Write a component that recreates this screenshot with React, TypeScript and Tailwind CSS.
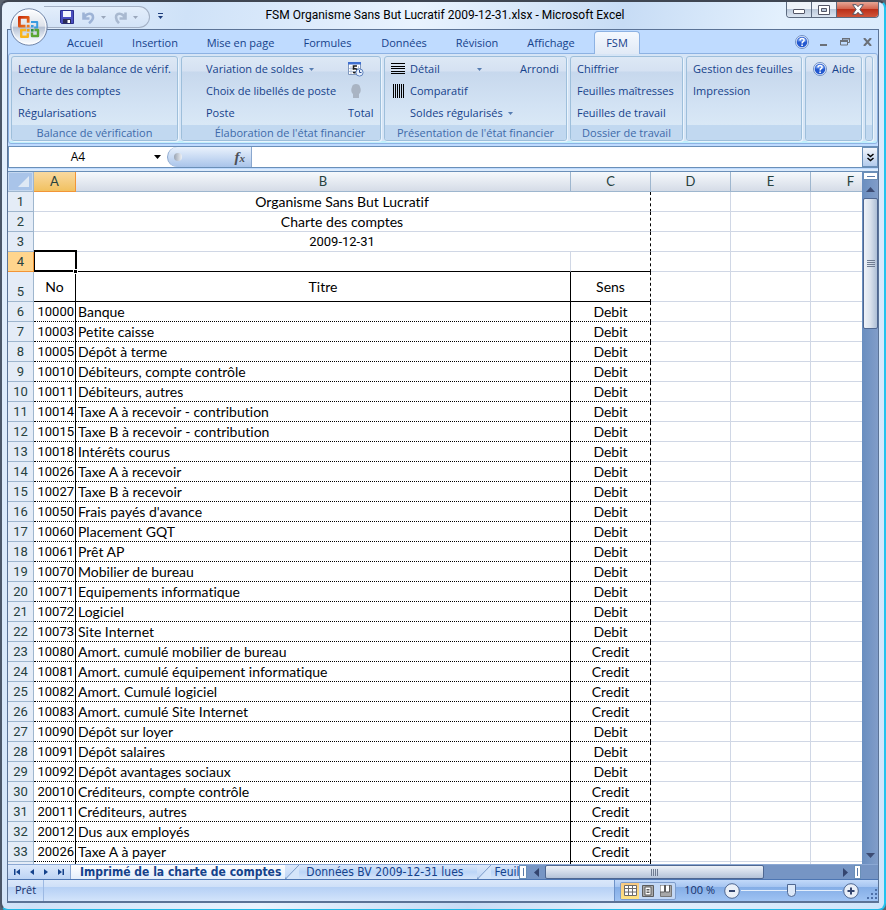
import { useState } from "react"
import type { ReactNode } from "react"

const tabs = [
  { label: "Accueil", width: "w-[66px]" },
  { label: "Insertion", width: "w-[74px]" },
  { label: "Mise en page", width: "w-[97px]" },
  { label: "Formules", width: "w-[77px]" },
  { label: "Données", width: "w-[76px]" },
  { label: "Révision", width: "w-[70px]" },
  { label: "Affichage", width: "w-[78px]" },
]

const accounts = [
  ["10000", "Banque", "Debit"],
  ["10003", "Petite caisse", "Debit"],
  ["10005", "Dépôt à terme", "Debit"],
  ["10010", "Débiteurs, compte contrôle", "Debit"],
  ["10011", "Débiteurs, autres", "Debit"],
  ["10014", "Taxe A à recevoir - contribution", "Debit"],
  ["10015", "Taxe B à recevoir - contribution", "Debit"],
  ["10018", "Intérêts courus", "Debit"],
  ["10026", "Taxe A à recevoir", "Debit"],
  ["10027", "Taxe B à recevoir", "Debit"],
  ["10050", "Frais payés d'avance", "Debit"],
  ["10060", "Placement GQT", "Debit"],
  ["10061", "Prêt AP", "Debit"],
  ["10070", "Mobilier de bureau", "Debit"],
  ["10071", "Equipements informatique", "Debit"],
  ["10072", "Logiciel", "Debit"],
  ["10073", "Site Internet", "Debit"],
  ["10080", "Amort. cumulé mobilier de bureau", "Credit"],
  ["10081", "Amort. cumulé équipement informatique", "Credit"],
  ["10082", "Amort. Cumulé logiciel", "Credit"],
  ["10083", "Amort. cumulé Site Internet", "Credit"],
  ["10090", "Dépôt sur loyer", "Debit"],
  ["10091", "Dépôt salaires", "Debit"],
  ["10092", "Dépôt avantages sociaux", "Debit"],
  ["20010", "Créditeurs, compte contrôle", "Credit"],
  ["20011", "Créditeurs, autres", "Credit"],
  ["20012", "Dus aux employés", "Credit"],
  ["20026", "Taxe A à payer", "Credit"],
]

const digits = "font-[Roboto,'Open_Sans',sans-serif] text-[13px]"

const titles = [
  { text: "Organisme Sans But Lucratif", font: "" },
  { text: "Charte des comptes", font: "" },
  { text: "2009-12-31", font: digits },
]

function OfficeOrb() {
  return (
    <svg viewBox="0 0 38 38" className="size-[38px]" aria-hidden="true">
      <defs>
        <linearGradient id="orb" x1="0" y1="0" x2="0" y2="1">
          <stop offset="0" stopColor="#ffffff" />
          <stop offset="0.48" stopColor="#dde2ea" />
          <stop offset="0.5" stopColor="#b4bfd2" />
          <stop offset="0.8" stopColor="#e8eef6" />
          <stop offset="1" stopColor="#ffffff" />
        </linearGradient>
        <linearGradient id="orbRed" x1="0" y1="0" x2="1" y2="1">
          <stop offset="0" stopColor="#c9300c" />
          <stop offset="1" stopColor="#f0791c" />
        </linearGradient>
      </defs>
      <circle cx="19" cy="19" r="18.2" fill="url(#orb)" stroke="#7286a8" />
      <circle cx="19" cy="19" r="16.8" fill="none" stroke="#ffffff" strokeOpacity="0.8" />
      <g fill="none" strokeLinejoin="round">
        <path d="M15.500 18.200H9.400V9.300h8.800v5.500" stroke="url(#orbRed)" strokeWidth="2.800" />
        <path d="M21 14h6.200v5.500h-3" stroke="#3a9be0" strokeWidth="2" />
        <path d="M16 22h-4.800v6.800h6.600v-3.500" stroke="#f9b51a" strokeWidth="2.400" />
        <path d="M22 24.500v3.500h6v-6h-3.500" stroke="#5aa632" strokeWidth="2.400" />
      </g>
      <path d="M16.800 16.800h2.800v2.600h-2.800z" fill="#f0791c" />
      <path d="M21 17h2.600v2.400H21z" fill="#3a9be0" />
      <path d="M21 21h2.600v2.600H21z" fill="#2f8f3a" />
      <path d="M16.800 21h2.800v2.600h-2.800z" fill="#f4a312" />
    </svg>
  )
}

function HelpIcon() {
  return (
    <svg viewBox="0 0 14 14" className="size-[14px] shrink-0" aria-hidden="true">
      <circle cx="7" cy="7" r="6.500" fill="#e6eefb" stroke="#6f8fc4" />
      <circle cx="7" cy="7" r="5.300" fill="#2358cf" />
      <path d="M2.200 6a5 5 0 0 1 9.600 0c-2 1.200-7 1.200-9.600 0z" fill="#7ea6f2" opacity="0.7" />
      <path d="M5 5.400c0-2.600 4.100-2.500 4.100-.2C9.100 6.700 7.100 6.700 7.100 8.400" fill="none" stroke="#fff" strokeWidth="1.500" />
      <path d="M6.300 9.500h1.600V11H6.300z" fill="#fff" />
    </svg>
  )
}

function Caret({ className = "text-[#567db1]" }: { className?: string }) {
  return (
    <svg viewBox="0 0 5 3" className={`h-[3px] w-[5px] shrink-0 ${className}`} aria-hidden="true">
      <path d="M0 0h5L2.500 3z" fill="currentColor" />
    </svg>
  )
}

function RibbonGroup({
  label = "",
  size,
  labelClass = "",
  children,
}: {
  label?: string
  size: string
  labelClass?: string
  children?: ReactNode
}) {
  return (
    <section
      className={`flex min-w-0 shrink grow flex-col overflow-hidden rounded-[3px] border border-[#9ebfdb] bg-[linear-gradient(#dde8f5_0px,#d5e1f2_14px,#c7d8ed_15px,#d3e3f4_50px,#d9e8f6_68px)] shadow-[1px_1px_0_#eaf4fd] ${size}`}
    >
      <div className="flex h-[68px] pt-px">{children}</div>
      <div className={`h-[15px] bg-[#c1d8f0] text-center leading-[15px] whitespace-nowrap text-[#3e6aaa] ${labelClass}`}>{label}</div>
    </section>
  )
}

function Cmd({ children, className = "" }: { children: ReactNode; className?: string }) {
  return (
    <button type="button" className={`flex h-[22px] items-center gap-[5px] whitespace-nowrap ${className}`}>
      {children}
    </button>
  )
}

function TitleBar() {
  return (
    <header className="relative flex h-[27px] items-start">
      <div className="mt-[4px] ml-[37px] flex h-[22px] w-[106px] shrink-0 items-center rounded-r-full border border-l-0 border-[#a3b0c4] bg-gradient-to-b from-[#e3eefb] to-[#d3e3f7] pl-[16px]">
        <button type="button" aria-label="Enregistrer">
          <svg viewBox="0 0 14 14" className="size-[14px]" aria-hidden="true">
            <path d="M.5.5h13v13h-12l-1-1z" fill="#4a4fc0" stroke="#2b2f8f" />
            <path d="M3 1h8v6H3z" fill="#f4f7fd" />
            <path d="M3 9h8v4.500H3z" fill="#2a2c55" />
            <path d="M7.500 10h2.500v3H7.500z" fill="#fff" />
          </svg>
        </button>
        <button type="button" aria-label="Annuler" className="ml-[8px] flex items-center gap-[6px]">
          <svg viewBox="0 0 13 13" className="size-[13px]" aria-hidden="true">
            <path d="M1.500 1.500v6h6M2 7C4.500 1.500 11 1.500 11 6.200c0 2.500-1.500 4-4 6" fill="none" stroke="#9db3d6" strokeWidth="2.600" />
          </svg>
          <Caret className="text-[#9aa7bb]" />
        </button>
        <button type="button" aria-label="Rétablir" className="ml-[8px] flex items-center gap-[6px]">
          <svg viewBox="0 0 13 13" className="size-[13px]" aria-hidden="true">
            <path d="M11.500 1.500v6h-6M11 7C8.500 1.500 2 1.500 2 6.200c0 2.500 1 4 3 6" fill="none" stroke="#a9b9d0" strokeWidth="2.600" />
          </svg>
          <Caret className="text-[#9aa7bb]" />
        </button>
      </div>
      <button type="button" aria-label="Personnaliser" className="mt-[11px] ml-[8px] flex w-[6px] flex-col gap-[2px]">
        <span className="h-px w-[5px] bg-[#1d3d7c]" />
        <Caret className="text-[#1d3d7c]" />
      </button>
      <h1 className="grow pr-[60px] text-center font-[Roboto,'Open_Sans',sans-serif] text-[12px] leading-[27px] font-normal whitespace-nowrap text-black">
        FSM Organisme Sans But Lucratif 2009-12-31.xlsx - Microsoft Excel
      </h1>
      <div className="flex h-[16px] overflow-hidden rounded-b-[4px] border border-t-0 border-[#5c6a7f]">
        <button type="button" aria-label="Réduire" className="flex w-[25px] items-center justify-center border-r border-[#5c6a7f] bg-[linear-gradient(#eef3f9_45%,#b9c7d9_46%,#dbe5f1)]">
          <span className="mt-[4px] h-[5px] w-[12px] rounded-[1px] border border-[#535666] bg-white" />
        </button>
        <button type="button" aria-label="Agrandir" className="flex w-[25px] items-center justify-center border-r border-[#5c6a7f] bg-[linear-gradient(#eef3f9_45%,#b9c7d9_46%,#dbe5f1)]">
          <svg viewBox="0 0 12 10" className="h-[10px] w-[12px]" aria-hidden="true">
            <path d="M.5.5h11v9H.5z" fill="#fff" stroke="#535666" />
            <path d="M3.500 3.500h5v3h-5z" fill="#b9c7d9" stroke="#535666" />
          </svg>
        </button>
        <button type="button" aria-label="Fermer" className="flex w-[41px] items-center justify-center bg-[linear-gradient(#e6a797,#d4654f_45%,#b92d17_46%,#d0553a)]">
          <svg viewBox="0 0 12 11" className="h-[11px] w-[12px]" aria-hidden="true">
            <path d="M.7.700h3.500L6 2.700 7.800.700h3.500L7.900 5.500l3.400 4.800H7.800L6 8.300l-1.800 2H.7l3.400-4.800z" fill="#fff" stroke="#535666" />
          </svg>
        </button>
      </div>
      <button type="button" aria-label="Bouton Office" className="absolute top-[6px] left-[3px] z-10">
        <OfficeOrb />
      </button>
    </header>
  )
}

function TabStrip() {
  return (
    <nav className="flex h-[23px] items-stretch bg-[#bfdbff] pl-[44px]">
      {tabs.map((tab) => (
        <button key={tab.label} type="button" className={`pt-[3px] whitespace-nowrap ${tab.width}`}>
          {tab.label}
        </button>
      ))}
      <button type="button" className="relative z-10 mt-px -mb-px ml-[4px] w-[46px] rounded-t-[4px] border border-b-0 border-[#8db2e3] bg-gradient-to-b from-[#f4f8fe] to-[#e1eaf6]">
        FSM
      </button>
      <div className="ml-auto flex items-center gap-[11px] pr-[6px] text-[#6b7078]">
        <button type="button" aria-label="Aide">
          <HelpIcon />
        </button>
        <button type="button" aria-label="Réduire le classeur" className="mt-[7px] h-[2px] w-[7px] bg-current" />
        <button type="button" aria-label="Restaurer le classeur" className="ml-[2px]">
          <svg viewBox="0 0 10 8" className="h-[8px] w-[10px]" aria-hidden="true">
            <path d="M2.500 2V.500h7v4H8M1 3h6.500v4H.500V3z" fill="none" stroke="currentColor" />
            <path d="M0 2h8v2H0zM2 0h8v1.500H2z" fill="currentColor" />
          </svg>
        </button>
        <button type="button" aria-label="Fermer le classeur" className="ml-[2px]">
          <svg viewBox="0 0 9 8" className="h-[8px] w-[9px]" aria-hidden="true">
            <path d="M1 0l7 8M8 0L1 8" fill="none" stroke="currentColor" strokeWidth="2" />
          </svg>
        </button>
      </div>
    </nav>
  )
}

function Ribbon() {
  return (
    <div className="flex h-[91px] gap-[3px] rounded-[3px] border border-[#8db2e3] bg-[#d6e5f6] py-[2px] pr-[4px] pl-[2px] shadow-[inset_0_-2px_0_#c0f0fc]">
      <RibbonGroup label="Balance de vérification" size="basis-[167px]">
        <div className="pl-[6px]">
          <Cmd>Lecture de la balance de vérif.</Cmd>
          <Cmd>Charte des comptes</Cmd>
          <Cmd>Régularisations</Cmd>
        </div>
      </RibbonGroup>
      <RibbonGroup label="Élaboration de l'état financier" size="basis-[200px]" labelClass="pl-[18px]">
        <div className="w-[151px] pl-[24px]">
          <Cmd>
            Variation de soldes <Caret />
          </Cmd>
          <Cmd>Choix de libellés de poste</Cmd>
          <Cmd>Poste</Cmd>
        </div>
        <div className="pl-[15px]">
          <Cmd>
            <svg viewBox="0 0 16 16" className="size-[16px]" aria-hidden="true">
              <path d="M.5 1.500h12v12H.500z" fill="#fff" stroke="#7f97bd" />
              <path d="M0 1h13v2.500H0z" fill="#3f6fd0" />
              <path d="M3 5v8M10.500 5v8M1 7.500h11M1 10.500h11" stroke="#b7c4da" />
              <path d="M9 5H5.500v3c3-.8 3.800.6 3.500 2S6.500 12 5 11.300" fill="none" stroke="#1c1c1c" strokeWidth="1.600" />
              <circle cx="11.500" cy="11.500" r="3.600" fill="#e6effc" stroke="#5f82bd" />
              <path d="M11.500 9v2.500h2" fill="none" stroke="#2c4f94" />
            </svg>
          </Cmd>
          <Cmd>
            <svg viewBox="0 0 16 16" className="size-[16px]" aria-hidden="true">
              <path d="M4 4c0-4 8-4 8 0 1 2 1 4 0 6l-1 1v4H5v-4l-1-1c-1-2-1-4 0-6z" fill="#a9b4c3" />
            </svg>
          </Cmd>
          <Cmd>Total</Cmd>
        </div>
      </RibbonGroup>
      <RibbonGroup label="Présentation de l'état financier" size="basis-[183px]">
        <div className="w-[135px] pl-[6px]">
          <Cmd>
            <svg viewBox="0 0 14 12" className="h-[12px] w-[14px]" aria-hidden="true">
              <path d="M0 .500h14M0 3.500h14M0 5.500h14M0 8.500h14M0 10.500h14" stroke="#000" />
            </svg>
            <span className="w-[62px] text-left">Détail</span>
            <Caret />
          </Cmd>
          <Cmd>
            <svg viewBox="0 0 14 14" className="h-[14px] w-[14px]" aria-hidden="true">
              <path d="M2.500 0v14M4.500 0v14M6.500 0v14M8.500 0v14M10.500 0v14M12.500 0v14" stroke="#000" />
            </svg>
            Comparatif
          </Cmd>
          <Cmd className="pl-[19px]">
            Soldes régularisés <Caret />
          </Cmd>
        </div>
        <Cmd>Arrondi</Cmd>
      </RibbonGroup>
      <RibbonGroup label="Dossier de travail" size="basis-[113px]">
        <div className="pl-[6px]">
          <Cmd>Chiffrier</Cmd>
          <Cmd>Feuilles maîtresses</Cmd>
          <Cmd>Feuilles de travail</Cmd>
        </div>
      </RibbonGroup>
      <RibbonGroup size="basis-[116px]">
        <div className="pl-[6px]">
          <Cmd>Gestion des feuilles</Cmd>
          <Cmd>Impression</Cmd>
        </div>
      </RibbonGroup>
      <RibbonGroup size="basis-[57px]">
        <Cmd className="pl-[7px]">
          <HelpIcon /> Aide
        </Cmd>
      </RibbonGroup>
      <RibbonGroup size="basis-[8px]" />
    </div>
  )
}

function FormulaBar() {
  const [name, setName] = useState("A4")
  const [formula, setFormula] = useState("")

  return (
    <div className="mt-[2px] flex h-[22px] border border-r-0 border-[#6a8fb8] bg-white">
      <input
        aria-label="Zone Nom"
        value={name}
        onChange={(e) => setName(e.target.value)}
        className="w-[138px] text-center text-[12px] text-black outline-none"
      />
      <button type="button" aria-label="Liste des noms" className="flex w-[20px] items-center justify-center">
        <svg viewBox="0 0 7 4" className="h-[4px] w-[7px]" aria-hidden="true">
          <path d="M0 0h7L3.500 4z" fill="#000" />
        </svg>
      </button>
      <div className="flex w-[85px] items-center justify-between rounded-l-full border border-y-0 border-[#8aa7ce] bg-gradient-to-b from-[#eaf2fc] to-[#a9c4ea] pr-[6px] pl-[6px]">
        <span className="size-[8px] rounded-full bg-gradient-to-r from-[#9aa4b2] to-[#eef1f5]" />
        <button type="button" aria-label="Insérer une fonction" className="font-['Liberation_Serif',serif] text-[15px] leading-[18px] font-bold text-[#4b4f57] italic">
          f<span className="text-[11px]">x</span>
        </button>
      </div>
      <input aria-label="Barre de formule" value={formula} onChange={(e) => setFormula(e.target.value)} className="min-w-0 grow outline-none" />
      <button type="button" aria-label="Développer la barre" className="flex w-[16px] items-center justify-center border border-[#6a8fb8] bg-gradient-to-b from-[#f1f5fb] to-[#b3cbec]">
        <svg viewBox="0 0 7 9" className="h-[9px] w-[7px]" aria-hidden="true">
          <path d="M.500 1l3 2.500 3-2.500M.500 5l3 2.500 3-2.500" fill="none" stroke="#000" strokeWidth="1.500" />
        </svg>
      </button>
    </div>
  )
}

const grid = "border-r border-b border-[#d0d7e5] p-0"
const colHead = "border-r border-b border-[#9eb6ce] bg-gradient-to-b from-[#f6f9fc] to-[#d5dce7] p-0 text-[13px] font-normal text-[#27413e]"

function RowHead({ n, active = false, tall = false }: { n: number; active?: boolean; tall?: boolean }) {
  return (
    <th
      scope="row"
      className={`border-r border-b p-0 align-bottom font-normal text-[#27413e] ${digits} ${tall ? "h-[30px]" : "h-[20px]"} ${
        active ? "border-[#f29536] bg-[#ffd58d]" : "border-[#9eb6ce] bg-[#e4ecf7]"
      }`}
    >
      {n}
    </th>
  )
}

function EmptyCells() {
  return (
    <>
      <td className={grid} />
      <td className={grid} />
      <td className={grid} />
    </>
  )
}

function Sheet() {
  return (
    <div className="min-w-0 grow overflow-hidden bg-white">
      <table className="w-[883px] table-fixed border-separate border-spacing-0 font-[Lato,'Open_Sans',sans-serif] text-[14px] leading-[19px] text-black [font-variant-ligatures:none]">
        <colgroup>
          <col className="w-[26px]" />
          <col className="w-[42px]" />
          <col className="w-[495px]" />
          <col className="w-[80px]" />
          <col className="w-[80px]" />
          <col className="w-[80px]" />
          <col className="w-[80px]" />
        </colgroup>
        <thead>
          <tr className="h-[20px]">
            <td className="border-r border-b border-[#9eb6ce] bg-[#a9c4e9] p-0">
              <svg viewBox="0 0 25 19" className="block h-[19px] w-[25px]" aria-hidden="true">
                <path d="M.500.500h24v18H.500z" fill="none" stroke="#c5d8f0" />
                <path d="M21 4v11H10z" fill="#dfe9f5" />
              </svg>
            </td>
            <th scope="col" className="border-r border-b border-[#f29536] bg-gradient-to-b from-[#f9d99f] to-[#f1c15f] p-0 text-[13px] font-normal text-[#27413e]">
              A
            </th>
            {["B", "C", "D", "E", "F"].map((c) => (
              <th key={c} scope="col" className={colHead}>
                {c}
              </th>
            ))}
          </tr>
        </thead>
        <tbody>
          {titles.map((title, i) => (
            <tr key={title.text}>
              <RowHead n={i + 1} />
              <td
                colSpan={3}
                className={`border-r border-b border-r-black border-b-[#d0d7e5] p-0 text-center [border-right-style:dashed] ${title.font}`}
              >
                {title.text}
              </td>
              <EmptyCells />
            </tr>
          ))}
          <tr>
            <RowHead n={4} active />
            <td className="relative border-r border-b border-black p-0">
              {/* selection frame with its fill handle */}
              <span className="absolute -top-[2px] -right-[2px] -bottom-px left-0 border-2 border-l border-black" />
              <span className="absolute -right-[3px] -bottom-[3px] size-[5px] border border-white bg-black" />
            </td>
            <td className="border-r border-b border-r-[#d0d7e5] border-b-black p-0" />
            <td className="border-r border-b border-black p-0 [border-right-style:dashed]" />
            <EmptyCells />
          </tr>
          <tr>
            <RowHead n={5} tall />
            <td className="border-r border-b border-black p-0 text-center">No</td>
            <td className="border-r border-b border-black p-0 text-center">Titre</td>
            <td className="border-r border-b border-black p-0 text-center [border-right-style:dashed]">Sens</td>
            <EmptyCells />
          </tr>
          {accounts.map(([no, titre, sens], i) => (
            <tr key={no}>
              <RowHead n={i + 6} />
              <td className={`border-r border-b border-black p-0 pr-px text-right [border-bottom-style:dotted] ${digits}`}>{no}</td>
              <td className="border-r border-b border-black p-0 pl-[2px] [border-bottom-style:dotted]">{titre}</td>
              <td className="border-r border-b border-black p-0 text-center [border-right-style:dashed] [border-bottom-style:dotted]">{sens}</td>
              <EmptyCells />
            </tr>
          ))}
          <tr className="h-[2px]">
            <td className="border-r border-[#9eb6ce] bg-[#e4ecf7] p-0" />
            <td className="border-r border-black p-0" />
            <td className="border-r border-black p-0" />
            <td className="border-r border-dashed border-black p-0" />
            <td className="border-r border-[#d0d7e5] p-0" />
            <td className="border-r border-[#d0d7e5] p-0" />
            <td className="p-0" />
          </tr>
        </tbody>
      </table>
    </div>
  )
}

function VerticalScroll() {
  return (
    <div className="flex w-[16px] shrink-0 flex-col border-l border-[#6a8fc0] bg-gradient-to-r from-[#6b8fc0] to-[#819dc9]">
      <div className="flex h-[8px] items-center justify-center border border-[#6a8fb8] bg-white">
        <span className="h-px w-[8px] bg-[#5b7ba8]" />
      </div>
      <button type="button" aria-label="Défiler vers le haut" className="flex h-[18px] items-center justify-center">
        <svg viewBox="0 0 9 5" className="h-[5px] w-[9px]" aria-hidden="true">
          <path d="M0 5h9L4.500 0z" fill="#3c4b72" />
        </svg>
      </button>
      <div className="flex h-[131px] flex-col items-center justify-center gap-px rounded-[2px] border border-[#4f6791] bg-gradient-to-r from-[#eef2f8] via-[#d9e1ec] to-[#aebfd6]">
        <span className="h-px w-[8px] bg-[#6f7c92]" />
        <span className="h-px w-[8px] bg-[#6f7c92]" />
        <span className="h-px w-[8px] bg-[#6f7c92]" />
        <span className="h-px w-[8px] bg-[#6f7c92]" />
      </div>
      <button type="button" aria-label="Défiler vers le bas" className="mt-auto flex h-[18px] items-center justify-center">
        <svg viewBox="0 0 9 5" className="h-[5px] w-[9px]" aria-hidden="true">
          <path d="M0 0h9L4.500 5z" fill="#3c4b72" />
        </svg>
      </button>
    </div>
  )
}

const navPaths = [
  { label: "Première feuille", d: "M1 1h1.500v6H1zM7 1v6L3 4z" },
  { label: "Feuille précédente", d: "M6 1v6L2 4z" },
  { label: "Feuille suivante", d: "M2 1v6l4-3z" },
  { label: "Dernière feuille", d: "M1 1v6l4-3zM5.500 1H7v6H5.500z" },
]

function Slant() {
  return (
    <svg viewBox="0 0 14 15" className="h-[15px] w-[14px] shrink-0" aria-hidden="true">
      <path d="M14 0L0 15h14z" fill="#d5e5fa" />
      <path d="M14 0L0 14.500" fill="none" stroke="#7d9cc8" />
      <path d="M0 15v-3l3 3z" fill="#7d9cc8" />
    </svg>
  )
}

function SheetTabs() {
  return (
    <div className="flex h-[16px] overflow-hidden border-t border-b border-t-[#8ba8d4] border-b-[#4d76b3] bg-gradient-to-b from-[#dce9fb] to-[#bdd4f4] font-['DejaVu_Sans_Condensed','DejaVu_Sans',sans-serif] text-[12px] leading-[14px] text-[#15428b]">
      <div className="flex w-[63px] shrink-0 items-center justify-around border-r border-[#8ba8d4] px-[2px]">
        {navPaths.map((nav) => (
          <button key={nav.label} type="button" aria-label={nav.label}>
            <svg viewBox="0 0 8 8" className="size-[8px]" aria-hidden="true">
              <path d={nav.d} fill="#15428b" />
            </svg>
          </button>
        ))}
      </div>
      <button type="button" className="shrink-0 bg-gradient-to-b from-white to-[#e4eefb] pr-[4px] pl-[9px] font-bold whitespace-nowrap">
        Imprimé de la charte de comptes
      </button>
      <Slant />
      <button type="button" className="shrink-0 bg-gradient-to-b from-[#dbe8fa] via-[#bcd5f7] to-[#d6e5fa] pr-[14px] pl-[7px] whitespace-nowrap">
        Données BV 2009-12-31 lues
      </button>
      <Slant />
      <button type="button" className="shrink-0 bg-gradient-to-b from-[#dbe8fa] via-[#bcd5f7] to-[#d6e5fa] pl-[3px] text-left whitespace-nowrap">
        Feuil
      </button>
      <span className="flex w-[8px] shrink-0 items-center justify-center border border-[#6a8fb8] bg-white">
        <span className="h-[8px] w-px bg-[#5b7ba8]" />
      </span>
      <div className="flex min-w-0 grow bg-[#7695c4]">
        <button type="button" aria-label="Défiler vers la gauche" className="flex w-[18px] shrink-0 items-center justify-center">
          <svg viewBox="0 0 5 9" className="h-[9px] w-[5px]" aria-hidden="true">
            <path d="M5 0v9L0 4.500z" fill="#34456f" />
          </svg>
        </button>
        <div className="flex w-[67%] items-center justify-center gap-px rounded-[2px] border border-[#4f6791] bg-gradient-to-b from-[#eef2f8] to-[#b4c3d9]">
          <span className="h-[7px] w-px bg-[#6f7c92]" />
          <span className="h-[7px] w-px bg-[#6f7c92]" />
          <span className="h-[7px] w-px bg-[#6f7c92]" />
          <span className="h-[7px] w-px bg-[#6f7c92]" />
        </div>
        <button type="button" aria-label="Défiler vers la droite" className="ml-auto flex w-[18px] shrink-0 items-center justify-center">
          <svg viewBox="0 0 5 9" className="h-[9px] w-[5px]" aria-hidden="true">
            <path d="M0 0v9l5-4.500z" fill="#34456f" />
          </svg>
        </button>
      </div>
      <span className="flex w-[7px] shrink-0 items-center justify-center border border-[#6a8fb8] bg-white">
        <span className="h-[8px] w-px bg-[#5b7ba8]" />
      </span>
      <span className="w-[17px] shrink-0 bg-[#7695c4]" />
    </div>
  )
}

function ZoomButton({ label, d }: { label: string; d: string }) {
  return (
    <button type="button" aria-label={label} className="shrink-0">
      <svg viewBox="0 0 16 16" className="size-[16px]" aria-hidden="true">
        <circle cx="8" cy="8" r="7.300" fill="#e9eff8" stroke="#4f6791" />
        <path d={d} fill="none" stroke="#34456f" strokeWidth="2" />
      </svg>
    </button>
  )
}

function StatusBar() {
  const [zoom, setZoom] = useState(100)

  return (
    <footer className="flex h-[22px] items-stretch border-b border-[#5b7396] bg-[linear-gradient(#dbe8fa_0%,#cfe0f8_32%,#b5d0f5_34%,#d3e4fb_100%)] text-[#15306b]">
      <span className="w-[36px] border-r border-[#9cb9e3] pl-[7px] leading-[20px]">Prêt</span>
      <div className="ml-auto flex items-center border-l border-[#6d92c9] bg-[linear-gradient(#c2d9f9_0%,#a6c5f1_32%,#84ade6_34%,#9fc3f3_100%)] pl-[5px]">
        <div className="flex h-[18px] overflow-hidden rounded-[2px] border border-[#7d9ccb] bg-[#c3d8f5]">
          <button type="button" aria-label="Normal" className="flex w-[18px] items-center justify-center bg-gradient-to-b from-[#f7c983] to-[#ffe37f]">
            <svg viewBox="0 0 13 11" className="h-[11px] w-[13px]" aria-hidden="true">
              <path d="M.500.500h12v10H.500zM.500 3.500h12M.500 7h12M4.500.500v10M8.500.500v10" fill="#fff" stroke="#6b6b6b" />
            </svg>
          </button>
          <button type="button" aria-label="Mise en page" className="flex w-[18px] items-center justify-center">
            <svg viewBox="0 0 12 12" className="size-[12px]" aria-hidden="true">
              <path d="M.500.500h11v11H.500z" fill="#a8a8a8" stroke="#5c5c5c" />
              <path d="M3 2h6v8H3z" fill="#fff" stroke="#5c5c5c" />
              <path d="M4.500 4.500h3M4.500 6h3M4.500 7.500h3" stroke="#5c5c5c" />
            </svg>
          </button>
          <button type="button" aria-label="Aperçu des sauts de page" className="flex w-[18px] items-center justify-center">
            <svg viewBox="0 0 12 12" className="size-[12px]" aria-hidden="true">
              <path d="M.500.500h11v11H.500z" fill="#a8a8a8" stroke="#777" />
              <path d="M0 0h4.500v7H0zM5.500 0h4v7h-4z" fill="#fff" stroke="#5c5c5c" />
            </svg>
          </button>
        </div>
        <button type="button" className="mr-[9px] ml-[8px] whitespace-nowrap">{zoom} %</button>
        <ZoomButton label="Zoom arrière" d="M5 8h6" />
        <input
          type="range"
          aria-label="Zoom"
          min={10}
          max={190}
          value={zoom}
          onChange={(e) => setZoom(Number(e.target.value))}
          className="mx-px h-[16px] w-[101px] appearance-none bg-[linear-gradient(#e3eefc,#e3eefc)] bg-[length:100%_1px] bg-center bg-no-repeat [&::-webkit-slider-thumb]:h-[13px] [&::-webkit-slider-thumb]:w-[9px] [&::-webkit-slider-thumb]:appearance-none [&::-webkit-slider-thumb]:rounded-b-[5px] [&::-webkit-slider-thumb]:border [&::-webkit-slider-thumb]:border-[#4f6791] [&::-webkit-slider-thumb]:bg-[#dce8f8]"
        />
        <ZoomButton label="Zoom avant" d="M4.500 8h7M8 4.500v7" />
        <svg viewBox="0 0 11 11" className="mt-[7px] ml-[8px] size-[11px]" aria-hidden="true">
          <path d="M8 0h2v2H8zM4 4h2v2H4zM8 4h2v2H8zM0 8h2v2H0zM4 8h2v2H4zM8 8h2v2H8z" fill="#4d6fa8" />
        </svg>
      </div>
    </footer>
  )
}

export default function App() {
  return (
    <div className="bg-[#5b6470] font-['Open_Sans','Noto_Sans',sans-serif] text-[11px] text-[#15428b]">
      <div className="rounded-[8px] border-2 border-t-[#3f4652] border-r-[#22c3ee] border-b-[#22b8e6] border-l-[#4a5668] bg-[linear-gradient(100deg,#e6f1fd_0%,#cfe2f8_18%,#e9f3fe_40%,#c7dcf5_60%,#e3f0fd_75%,#cfe5fb_100%)] px-[5px] pb-[6px]">
        <TitleBar />
        <div className="border border-[#5b7396] bg-[#bfdbff]">
          <TabStrip />
          <Ribbon />
          <FormulaBar />
          <div className="mt-px h-[3px] border-b border-[#6a8fb8] bg-[#dcebfc]" />
          <div className="flex">
            <Sheet />
            <VerticalScroll />
          </div>
          <SheetTabs />
          <StatusBar />
        </div>
      </div>
    </div>
  )
}
